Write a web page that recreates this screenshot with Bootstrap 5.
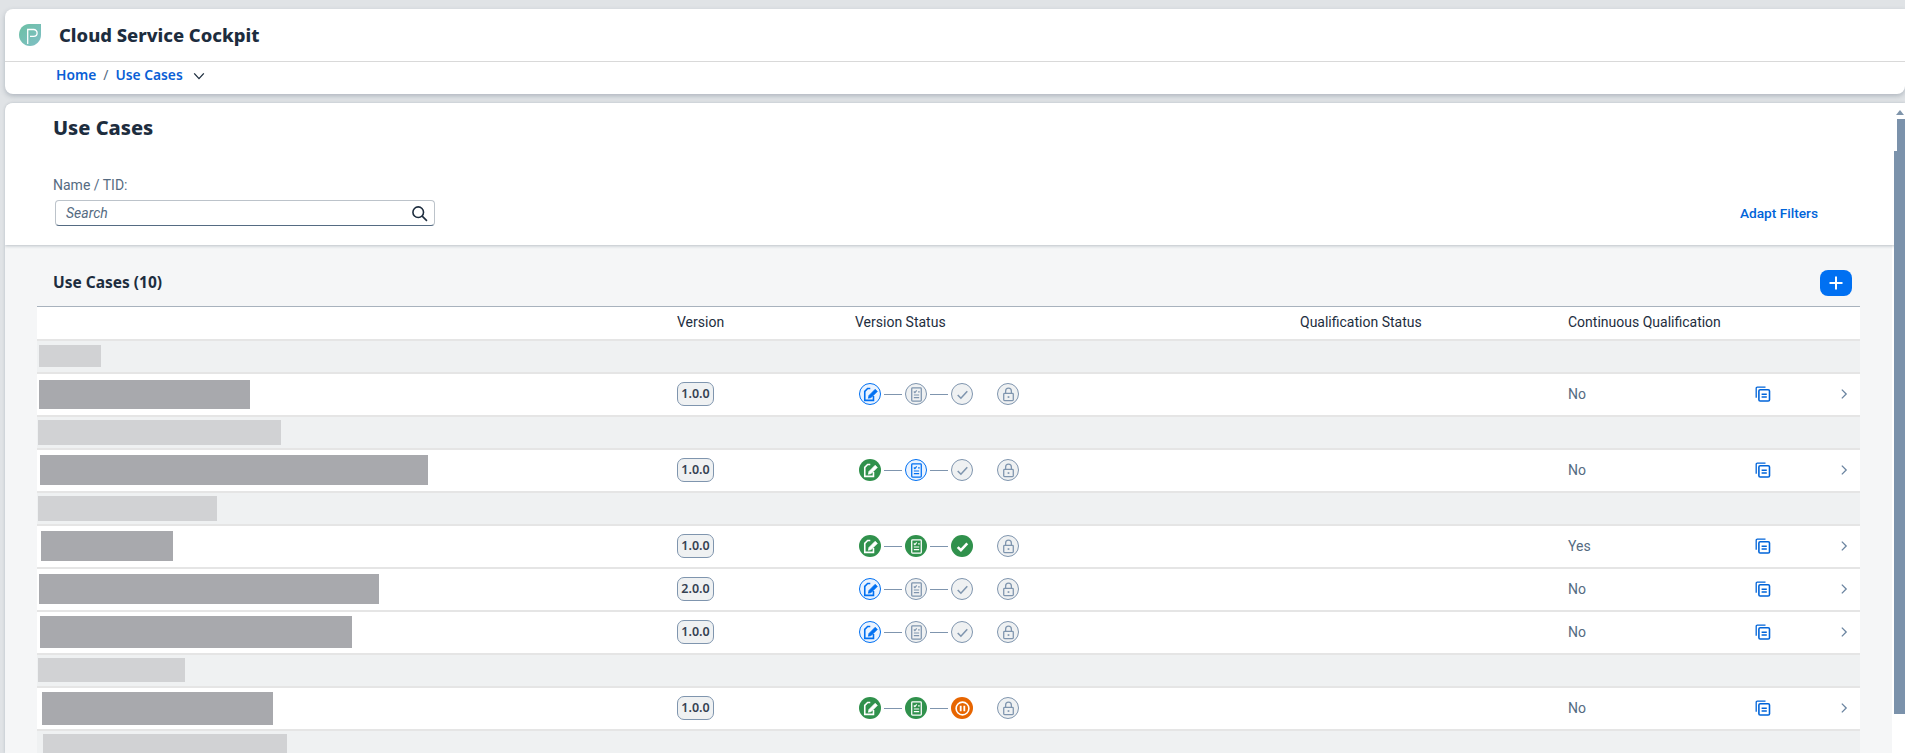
<!DOCTYPE html>
<html lang="en">
<head>
<meta charset="UTF-8" />
<meta name="viewport" content="width=device-width, initial-scale=1.0" />
<title>Use Cases</title>
<link rel="stylesheet" href="https://cdn.jsdelivr.net/npm/bootstrap@5.3.0/dist/css/bootstrap.min.css" />
<style>
  html, body { height: 100%; overflow: hidden; }
  body {
    background: #e0e3e6;
    font-family: Roboto, "Liberation Sans", sans-serif;
    color: #1d2d3e;
    font-size: 14px;
  }
  .shell-wrap { padding: 9px 0 0 5px; height: 753px; }
  .head-card { background: #fff; height: 85px; border-radius: 8px 0 8px 8px; box-shadow: 0 2px 5px rgba(50,70,90,.28); }
  .head-top { height: 53px; border-bottom: 1px solid #d9d9d9; padding-left: 14px; }
  .app-title { font-family: "Noto Sans", sans-serif; font-size: 18.4px; font-weight: 800; margin-left: 18px; color: #1d2d3e; }
  .crumbs { height: 32px; padding: 0 0 5px 51px; font-family: "Noto Sans", sans-serif; font-weight: 600; font-size: 13.8px; }
  .crumbs a { color: #0a5fd6; text-decoration: none; }
  .crumbs span { color: #556b82; margin: 0 7px; font-weight: 400; }
  .crumb-caret { margin-left: 9px; }
  .page-card { margin-top: 9px; height: 650px; background: #fff; border-radius: 8px 0 0 0; overflow: hidden; box-shadow: 0 0 3px rgba(50,70,90,.25); }
  .filter-bar { background: #fff; height: 142px; padding: 0 0 0 48px; box-shadow: 0 1px 3px rgba(50,70,90,.3); position: relative; }
  .page-title { font-family: "Noto Sans", sans-serif; font-size: 20px; font-weight: 800; line-height: 27px; padding-top: 11px; margin: 0; }
  .field-label { font-size: 14px; color: #556b82; margin-top: 34px; line-height: 20px; }
  .search-box { width: 380px; height: 26px; margin: 5px 0 0 2px; border: 1px solid #bcc3ca; border-bottom-color: #556b82; border-radius: 4px; padding: 0 6px 0 10px; }
  .search-box em { font-size: 14px; color: #556b82; }
  .adapt-link { font-size: 13.7px; font-weight: 500; color: #0064d9; text-decoration: none; margin: 0 87px 2px 0; }
  .tbl-area { margin-right: 13px; height: 508px; background: #f5f6f7; }
  .tbl-title { height: 61px; padding: 15px 40px 0 48px; }
  .tbl-title b { font-family: "Noto Sans", sans-serif; font-size: 15.5px; font-weight: 700; }
  .add-btn { width: 32px; height: 26px; background: #0070f2; border: 0; border-radius: 8px; padding: 0; }
  .tbl-outer { margin: 0 32px; }
  .uc-table { table-layout: fixed; width: 100%; margin: 0; border-top: 1px solid #a8b2bd; }
  .uc-table col:nth-child(1) { width: 640px; }
  .uc-table col:nth-child(2) { width: 178px; }
  .uc-table col:nth-child(3) { width: 445px; }
  .uc-table col:nth-child(4) { width: 268px; }
  .uc-table col:nth-child(5) { width: 187px; }
  .uc-table col:nth-child(6) { width: 82px; }
  .uc-table th { height: 33px; font-weight: 400; font-size: 14px; color: #1d2d3e; background: #fff; border-bottom: 2px solid #e5e5e5; padding: 0; vertical-align: middle; }
  .uc-table td { padding: 0; vertical-align: middle; border-bottom: 2px solid #e5e5e5; color: #556b82; font-size: 14px; }
  .row-grp td { height: 33px; background: #eff1f2; }
  .row-item td { height: 43px; background: #fff; }
  .redact-a, .redact-b { display: block; }
  .redact-a { background: #a8a9ad; }
  .redact-b { background: #d1d2d4; }
  .ver-pill { display: inline-block; width: 37px; height: 24px; line-height: 22px; text-align: center; font-family: "Noto Sans", sans-serif; font-size: 12.5px; font-weight: 600; color: #354252; background: #eff1f2; border: 1px solid #7f95ae; border-radius: 7px; }
  .step { width: 22px; height: 22px; border-radius: 50%; flex: none; display: flex; align-items: center; justify-content: center; }
  .step svg { width: 17px; height: 17px; fill: none; stroke: currentColor; }
  .st-idle { background: #eff1f2; border: 1px solid #7f95ae; color: #7f95ae; }
  .st-active { background: #eaf3ff; border: 1px solid #0070f2; color: #0070f2; }
  .st-done { background: #30914c; color: #fff; }
  .st-hold { background: #e76500; color: #fff; }
  .step-line { width: 18px; height: 1px; background: #7f95ae; flex: none; margin: 0 3px; }
  .step-gap { width: 24px; flex: none; }
  .scroll-rail { position: absolute; right: 0; top: 103px; width: 13px; height: 650px; }
  .scroll-up { position: absolute; top: 7px; right: 1px; width: 0; height: 0; border: 4px solid transparent; border-top: 0; border-bottom: 5px solid #7f95ab; }
  .scroll-thumb-a { position: absolute; top: 16px; right: 0; width: 8px; height: 33px; background: #7b92ab; }
  .scroll-thumb-b { position: absolute; top: 48px; right: 0; width: 11px; height: 563px; background: #7b92ab; }
</style>
</head>
<body>
<svg class="d-none">
  <symbol id="ic-note" viewBox="0 0 16 16"><path d="M7.800 2.300H5.300L2.600 5v8.500h8.200V9.500" stroke-width="1.500"/><path d="M6 11.500l.6-2.600 5.800-5.800 2 2-5.800 5.800z" fill="currentColor" stroke-width=".7"/></symbol>
  <symbol id="ic-list" viewBox="0 0 16 16"><rect x="3.500" y="1.800" width="9" height="12.400" rx=".8" stroke-width="1.200"/><path d="M5.500 5.200l1 1 1.700-2M9.500 5.500h1.500M5.500 8.500h5M5.500 11h5" stroke-width="1.100"/></symbol>
  <symbol id="ic-check" viewBox="0 0 16 16"><path d="M3.500 8.500l3 3 6-6.500" stroke-width="1.500"/></symbol>
  <symbol id="ic-check-b" viewBox="0 0 16 16"><path d="M3.500 8.500l3 3 6-6.500" stroke-width="2.400"/></symbol>
  <symbol id="ic-pause" viewBox="0 0 16 16"><circle cx="8" cy="8" r="6" stroke-width="1.500"/><path d="M6.300 5.500v5M9.700 5.500v5" stroke-width="1.700"/></symbol>
  <symbol id="ic-lock" viewBox="0 0 16 16"><rect x="3.500" y="7" width="9" height="6.800" rx=".8" stroke-width="1.200"/><path d="M5.300 7V4.800a2.700 2.700 0 0 1 5.400 0V7" stroke-width="1.200"/><rect x="7.200" y="9.600" width="1.600" height="1.600" fill="currentColor" stroke="none"/></symbol>
  <symbol id="ic-copy" viewBox="0 0 16 16"><path d="M10.500 1.200H2.200a1 1 0 0 0-1 1v9.500" stroke-width="1.300"/><rect x="3.900" y="3.700" width="10.600" height="11.300" rx="1.300" stroke-width="1.600"/><path d="M6.600 8.200h5.200M6.600 11h5.200" stroke-width="1.600"/></symbol>
  <symbol id="ic-next" viewBox="0 0 16 16"><path d="M5.500 3l5 5-5 5" stroke-width="1.500"/></symbol>
</svg>

<div class="shell-wrap">
  <div class="head-card">
    <div class="head-top d-flex align-items-center">
      <svg width="22" height="22" viewBox="0 0 22 22">
        <defs><linearGradient id="lg" x1="0" y1="0" x2="1" y2="1"><stop offset="0" stop-color="#6cc0a4"/><stop offset="1" stop-color="#80bfc6"/></linearGradient></defs>
        <path d="M10 0h12v11c0 6-5 11-11 11S0 17 0 11 4 0 10 0z" fill="url(#lg)"/>
        <path d="M8.700 20V5.500h6a3.400 3.400 0 0 1 0 6.800H11" fill="none" stroke="#fff" stroke-width="1.300"/>
      </svg>
      <span class="app-title">Cloud Service Cockpit</span>
    </div>
    <div class="crumbs d-flex align-items-center">
      <a href="#">Home</a><span>/</span><a href="#">Use Cases</a>
      <svg class="crumb-caret" width="14" height="14" viewBox="0 0 16 16" fill="none" stroke="#1d2d3e" stroke-width="1.500"><path d="M2.500 5l5.500 6 5.500-6"/></svg>
    </div>
  </div>

  <div class="page-card">
    <div class="filter-bar">
      <h1 class="page-title">Use Cases</h1>
      <div class="d-flex align-items-end justify-content-between">
        <div>
          <div class="field-label">Name / TID:</div>
          <div class="search-box d-flex align-items-center justify-content-between">
            <em>Search</em>
            <svg width="17" height="17" viewBox="0 0 16 16" fill="none" stroke="#1d2d3e" stroke-width="1.500"><circle cx="6.800" cy="6.800" r="5"/><path d="M10.500 10.500l4.500 4.500"/></svg>
          </div>
        </div>
        <a href="#" class="adapt-link">Adapt Filters</a>
      </div>
    </div>

    <div class="tbl-area">
      <div class="tbl-title d-flex align-items-center justify-content-between">
        <b>Use Cases (10)</b>
        <button class="add-btn d-flex align-items-center justify-content-center" type="button">
          <svg width="16" height="16" viewBox="0 0 16 16" stroke="#fff" stroke-width="2"><path d="M8 1.500v13M1.500 8h13"/></svg>
        </button>
      </div>

      <div class="tbl-outer">
        <table class="uc-table" id="ucTable">
          <colgroup><col /><col /><col /><col /><col /><col /><col /></colgroup>
          <thead>
            <tr><th></th><th>Version</th><th>Version Status</th><th>Qualification Status</th><th>Continuous Qualification</th><th></th><th></th></tr>
          </thead>
          <tbody id="ucBody"></tbody>
        </table>
      </div>
    </div>
  </div>
</div>

<div class="scroll-rail">
  <div class="scroll-up"></div>
  <div class="scroll-thumb-a"></div>
  <div class="scroll-thumb-b"></div>
</div>

<script src="https://cdn.jsdelivr.net/npm/bootstrap@5.3.0/dist/js/bootstrap.bundle.min.js"></script>
<script>
  // names are blanked out in the picture, so rows only carry the box geometry: left, width, height
  var rows = [
    { g: [2, 62, 22] },
    { r: [2, 211, 29], v: "1.0.0", s: ["a", "i", "i"], q: "No" },
    { g: [1, 243, 25] },
    { r: [3, 388, 30], v: "1.0.0", s: ["d", "a", "i"], q: "No" },
    { g: [1, 179, 25] },
    { r: [4, 132, 30], v: "1.0.0", s: ["d", "d", "d"], q: "Yes" },
    { r: [2, 340, 30], v: "2.0.0", s: ["a", "i", "i"], q: "No" },
    { r: [3, 312, 32], v: "1.0.0", s: ["a", "i", "i"], q: "No" },
    { g: [1, 147, 24] },
    { r: [5, 231, 33], v: "1.0.0", s: ["d", "d", "h"], q: "No" },
    { g: [6, 244, 25] }
  ];
  var cls = { a: "st-active", i: "st-idle", d: "st-done", h: "st-hold" };

  function step(state, icon) {
    return '<div class="step ' + cls[state] + '"><svg><use href="#' + icon + '"/></svg></div>';
  }
  function box(name, b) {
    return '<span class="' + name + '" style="margin-left:' + b[0] + 'px;width:' + b[1] + 'px;height:' + b[2] + 'px"></span>';
  }

  var html = "";
  rows.forEach(function (row) {
    if (row.g) {
      html += '<tr class="row-grp"><td colspan="7">' + box("redact-b", row.g) + "</td></tr>";
      return;
    }
    var last = row.s[2] === "h" ? "ic-pause" : row.s[2] === "d" ? "ic-check-b" : "ic-check";
    html += '<tr class="row-item"><td>' + box("redact-a", row.r) + "</td>" +
      '<td><span class="ver-pill">' + row.v + "</span></td>" +
      '<td><div class="d-flex align-items-center ps-1">' +
      step(row.s[0], "ic-note") + '<i class="step-line"></i>' +
      step(row.s[1], "ic-list") + '<i class="step-line"></i>' +
      step(row.s[2], last) + '<i class="step-gap"></i>' +
      step("i", "ic-lock") + "</div></td>" +
      "<td></td><td>" + row.q + "</td>" +
      '<td><svg class="d-block" width="16" height="16" viewBox="0 0 16 16" fill="none" stroke="#0064d9"><use href="#ic-copy"/></svg></td>' +
      '<td><svg class="d-block" width="14" height="14" viewBox="0 0 16 16" fill="none" stroke="#6a84a0"><use href="#ic-next"/></svg></td></tr>';
  });
  document.getElementById("ucBody").innerHTML = html;
</script>
</body>
</html>
